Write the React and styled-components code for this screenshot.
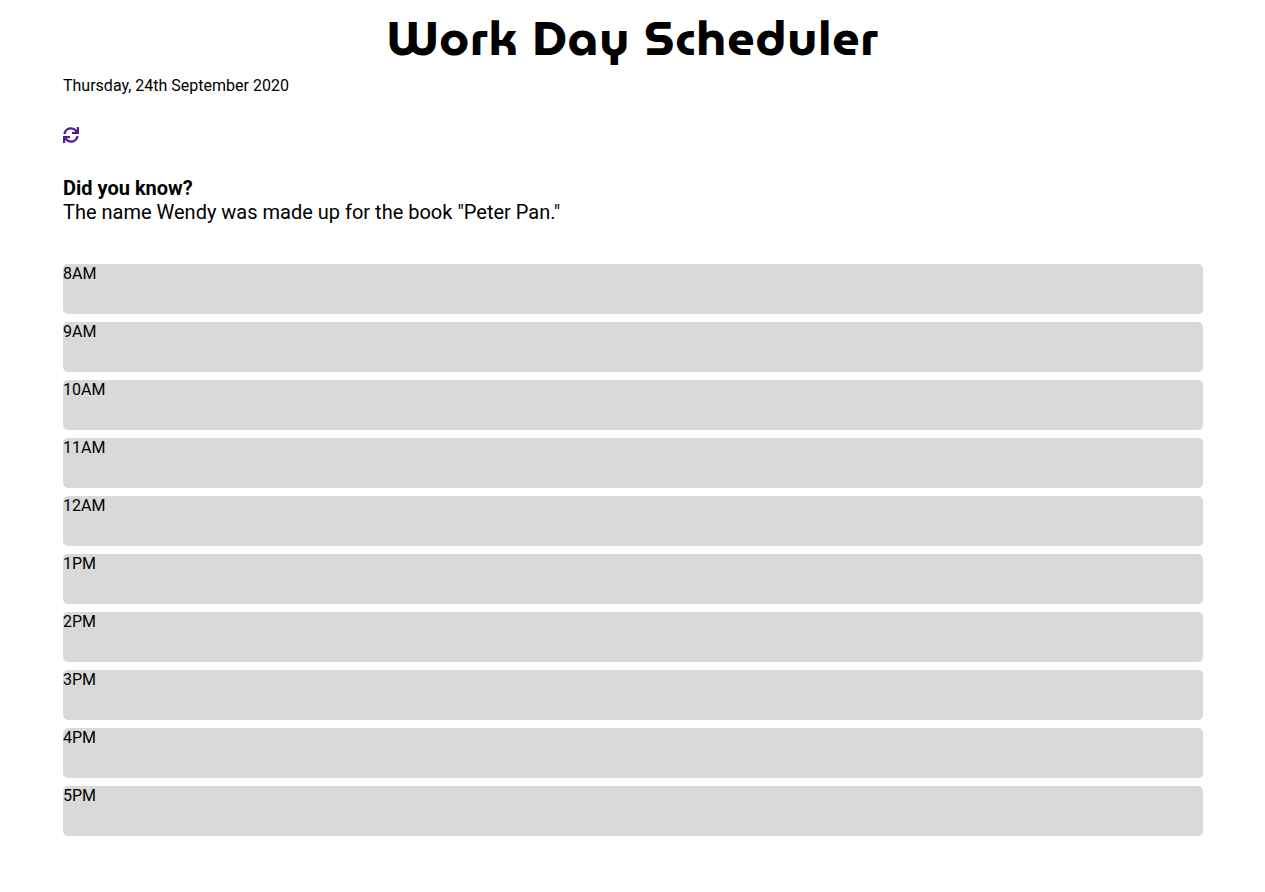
import React from "react";
import styled, { createGlobalStyle } from "styled-components";
import { FaSync } from "react-icons/fa";

const GlobalStyle = createGlobalStyle`
  *, *::before, *::after { box-sizing: border-box; }
  body {
    margin: 0;
    background: #fff;
    color: #000;
    font-family: Roboto, "Liberation Sans", sans-serif;
    font-size: 16px;
    font-weight: 400;
    line-height: 20px;
  }
`;

const Page = styled.main`
  margin: 0 62px 0 63px;
  padding: 8px 0 56px;
`;

const Title = styled.h1`
  margin: 0;
  font-family: MuseoModerno, Righteous, Lato, sans-serif;
  font-size: 48px;
  font-weight: 700;
  letter-spacing: 1px;
  line-height: 60px;
  text-align: center;
`;

const Today = styled.p`
  margin: 8px 0 31px;
`;

const Refresh = styled.a`
  display: block;
  width: 16px;
  height: 16px;
  color: #551a8b;

  svg { display: block; }
`;

const Fact = styled.section`
  margin: 33px 0 40px;
  font-size: 20px;
  line-height: 24px;
`;

const FactTitle = styled.h2`
  margin: 0;
  font-size: 20px;
  font-weight: 700;
`;

const FactText = styled.p`
  margin: 0;
`;

const Hours = styled.ul`
  display: flex;
  flex-direction: column;
  gap: 8px;
  margin: 0;
  padding: 0;
  list-style: none;
`;

const Hour = styled.li`
  min-height: 50px;
  border-radius: 5px;
  background: #d9d9d9;
`;

const hours = ["8AM", "9AM", "10AM", "11AM", "12AM", "1PM", "2PM", "3PM", "4PM", "5PM"];

export default function App() {
  return (
    <>
      <GlobalStyle />
      <Page>
        <Title>Work Day Scheduler</Title>
        <Today>Thursday, 24th September 2020</Today>
        <Refresh href="#" aria-label="Refresh">
          <FaSync size={16} />
        </Refresh>
        <Fact>
          <FactTitle>Did you know?</FactTitle>
          <FactText>The name Wendy was made up for the book "Peter Pan."</FactText>
        </Fact>
        <Hours>
          {hours.map((hour) => (
            <Hour key={hour}>{hour}</Hour>
          ))}
        </Hours>
      </Page>
    </>
  );
}
